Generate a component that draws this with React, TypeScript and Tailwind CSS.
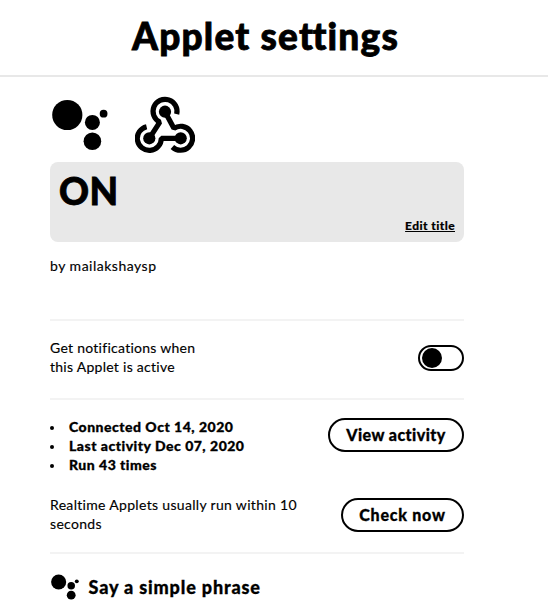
import type { ReactNode } from "react";

function AssistantIcon({ className }: { className: string }) {
  return (
    <svg viewBox="0 0 60 60" className={className} fill="#000" aria-hidden="true">
      <circle cx="17.3" cy="20" r="15.1" />
      <circle cx="42.4" cy="27.4" r="7.5" />
      <circle cx="53.6" cy="18.7" r="3.9" />
      <circle cx="42.4" cy="46.3" r="8.8" />
    </svg>
  );
}

function WebhooksIcon({ className }: { className: string }) {
  return (
    <svg viewBox="0 0 60 60" className={className} aria-hidden="true">
      <g fill="none" stroke="#000" strokeWidth="5.2">
        <path d="M41.7 19.2A12 12 0 1 0 24.8 27.1L14.3 43.3" strokeLinejoin="bevel" />
        <path d="M30 16.7L38.9 33.3A12 12 0 1 1 37.4 52" strokeLinejoin="bevel" />
        <path d="M45.7 43.3H26.3A12 12 0 1 1 11.6 31.7" strokeLinejoin="bevel" />
      </g>
      <circle cx="30" cy="16.7" r="6.1" />
      <circle cx="14.3" cy="43.3" r="6.1" />
      <circle cx="45.7" cy="43.3" r="6.1" />
    </svg>
  );
}

function PillButton({ children, className }: { children: ReactNode; className: string }) {
  return (
    <button
      className={`h-[34px] shrink-0 rounded-full border-2 border-black text-center text-[16px] leading-[30px] font-black whitespace-nowrap [-webkit-text-stroke:0.3px_black] ${className}`}
    >
      {children}
    </button>
  );
}

export default function App() {
  return (
    <div className="h-[612px] w-[548px] overflow-hidden bg-white font-['Lato','Liberation_Sans',sans-serif] text-[14px] leading-[19px] tracking-[0.32px] text-black [-webkit-text-stroke:0.15px_black]">
      <header className="flex h-[77px] justify-center border-b-2 border-[#e8e8e8] pr-[17px]">
        <h1 className="mt-[12px] text-[37px] leading-[48px] font-black tracking-[1.2px] whitespace-nowrap [-webkit-text-stroke:0.8px_black]">
          Applet se<span className="tracking-[-0.6px]">t</span>tings
        </h1>
      </header>
      <main className="ml-[50px] w-[414px]">
        <div className="flex h-[85px] pt-[18px]">
          <AssistantIcon className="h-[60px] w-[60px]" />
          <WebhooksIcon className="ml-[25px] h-[60px] w-[60px]" />
        </div>
        <section className="flex h-[80px] flex-col justify-between rounded-[8px] bg-[#e8e8e8] px-[9px] pt-[5px] pb-[7px]">
          <h2 className="text-[37px] leading-[48px] font-black tracking-[0.4px] [-webkit-text-stroke:0.8px_black]">ON</h2>
          <a className="self-end text-[12px] leading-[18px] font-black tracking-[0.42px] underline">Edit title</a>
        </section>
        <p className="mt-[14px] h-[63px] tracking-[0.5px]">by mailakshaysp</p>
        <section className="flex h-[79px] items-start justify-between border-t-2 border-[#f3f3f3] pt-[18px]">
          <p className="-mt-[1px] tracking-[0.27px]">
            Get notifications when
            <br />
            this Applet is active
          </p>
          <div role="switch" aria-checked="false" className="mt-[6px] flex h-[26px] w-[46px] items-center rounded-full border-2 border-black pl-[2px]">
            <span className="h-[20px] w-[20px] rounded-full bg-black" />
          </div>
        </section>
        <section className="h-[154px] border-t-2 border-[#f3f3f3] pt-[18px]">
          <div className="flex h-[80px] items-start justify-between">
            <ul className="-mt-[1px] font-black tracking-[0.5px] [-webkit-text-stroke:0.3px_black]">
              {["Connected Oct 14, 2020", "Last activity Dec 07, 2020", "Run 43 times"].map((item) => (
                <li key={item} className="flex items-center">
                  <span className="mt-[2px] mr-[15px] h-[4px] w-[4px] rounded-full bg-black" />
                  {item}
                </li>
              ))}
            </ul>
            <PillButton className="w-[136px] tracking-[0.45px]">View activity</PillButton>
          </div>
          <div className="flex items-start justify-between">
            <p className="-mt-[3px]">
              Realtime Applets usually run within 10
              <br />
              seconds
            </p>
            <PillButton className="w-[123px] tracking-[0.75px]">Check now</PillButton>
          </div>
        </section>
        <section className="flex border-t-2 border-[#f3f3f3] pt-[18px]">
          <AssistantIcon className="h-[30px] w-[30px]" />
          <h3 className="ml-[8.5px] text-[18px] leading-[30px] font-black tracking-[0.85px] [-webkit-text-stroke:0.3px_black]">Say a simple phrase</h3>
        </section>
      </main>
    </div>
  );
}
